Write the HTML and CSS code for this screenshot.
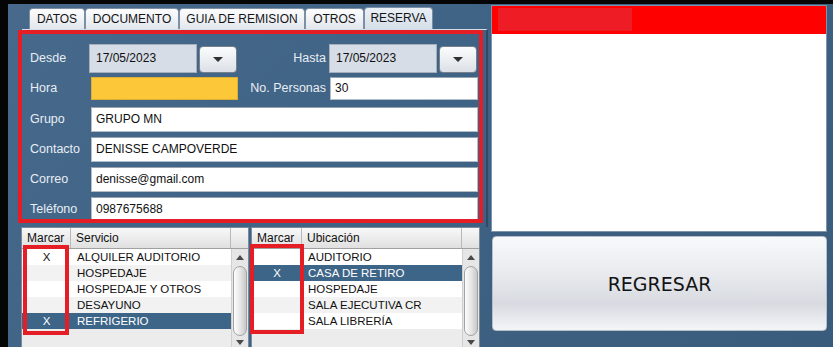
FILE: index.html
```html
<!DOCTYPE html>
<html lang="es">
<head>
<meta charset="utf-8">
<title>Reserva</title>
<link rel="stylesheet" href="styles.css">
</head>
<body>
<div class="screen">
  <div class="left">
    <div class="tabs">
      <div class="tab tab-datos">DATOS</div>
      <div class="tab tab-doc">DOCUMENTO</div>
      <div class="tab tab-guia">GUIA DE REMISION</div>
      <div class="tab tab-otros">OTROS</div>
      <div class="tab tab-reserva active">RESERVA</div>
    </div>
    <div class="pane">
      <div class="form">
        <div class="lbl lbl-date">Desde</div>
        <div class="date"><div class="date-in">17/05/2023</div><div class="date-btn"><span class="caret"></span></div></div>
        <div class="lbl lbl-date lbl-r">Hasta</div>
        <div class="date date-r"><div class="date-in">17/05/2023</div><div class="date-btn"><span class="caret"></span></div></div>

        <div class="lbl lbl-s">Hora</div>
        <div class="fld fld-s fld-yellow"></div>
        <div class="lbl lbl-s lbl-r">No. Personas</div>
        <div class="fld fld-s">30</div>

        <div class="lbl">Grupo</div>
        <div class="fld fld-wide">GRUPO MN</div>
        <div class="lbl">Contacto</div>
        <div class="fld fld-wide">DENISSE CAMPOVERDE</div>
        <div class="lbl">Correo</div>
        <div class="fld fld-wide">denisse@gmail.com</div>
        <div class="lbl">Teléfono</div>
        <div class="fld fld-wide">0987675688</div>
      </div>
    </div>
    <div class="tables">
      <div class="table t-left">
        <div class="thead"><div class="th c-mark">Marcar</div><div class="th c-name">Servicio</div><div class="th c-sb"></div></div>
        <div class="tbody">
          <div class="rows">
            <div class="row"><div class="td c-mark">X</div><div class="td c-name">ALQUILER AUDITORIO</div></div>
            <div class="row"><div class="td c-mark"></div><div class="td c-name">HOSPEDAJE</div></div>
            <div class="row"><div class="td c-mark"></div><div class="td c-name">HOSPEDAJE Y OTROS</div></div>
            <div class="row"><div class="td c-mark"></div><div class="td c-name">DESAYUNO</div></div>
            <div class="row sel"><div class="td c-mark">X</div><div class="td c-name">REFRIGERIO</div></div>
          </div>
          <div class="sb"><div class="sb-up"></div><div class="sb-thumb"></div><div class="sb-down"></div></div>
        </div>
      </div>
      <div class="table t-right">
        <div class="thead"><div class="th c-mark">Marcar</div><div class="th c-name">Ubicación</div><div class="th c-sb"></div></div>
        <div class="tbody">
          <div class="rows">
            <div class="row"><div class="td c-mark"></div><div class="td c-name">AUDITORIO</div></div>
            <div class="row sel"><div class="td c-mark">X</div><div class="td c-name">CASA DE RETIRO</div></div>
            <div class="row"><div class="td c-mark"></div><div class="td c-name">HOSPEDAJE</div></div>
            <div class="row"><div class="td c-mark"></div><div class="td c-name">SALA EJECUTIVA CR</div></div>
            <div class="row"><div class="td c-mark"></div><div class="td c-name">SALA LIBRERÍA</div></div>
          </div>
          <div class="sb"><div class="sb-up"></div><div class="sb-thumb"></div><div class="sb-down"></div></div>
        </div>
      </div>
    </div>
  </div>
  <div class="right">
    <div class="box"><div class="box-head"><div class="box-head-in"></div></div></div>
    <button class="btn">REGRESAR</button>
  </div>
  <div class="mark mark-form"></div>
  <div class="mark mark-t1"></div>
  <div class="mark mark-t2"></div>
</div>
</body>
</html>
```
FILE: styles.css
```css
body {
  margin: 0;
  width: 833px;
  height: 347px;
  overflow: hidden;
  background: #050505;
  font-family: "Liberation Sans", Arial, sans-serif;
  font-size: 12px;
}
.screen {
  position: relative;
  display: flex;
  align-items: flex-start;
  height: 347px;
  box-sizing: border-box;
  border-top: 4px solid #050505;
  border-left: 8px solid #050505;
  background: linear-gradient(135deg, #46698c 0%, #3f6385 45%, #3a5c7c 100%);
  overflow: hidden;
}
.left {
  flex: 0 0 480px;
  width: 480px;
}
.tabs {
  display: flex;
  align-items: flex-end;
  height: 22px;
  margin: 3px 0 0 21px;
}
.tab {
  box-sizing: border-box;
  height: 21px;
  border: 1px solid #7d8fa3;
  border-bottom: none;
  border-radius: 4px 4px 0 0;
  background: linear-gradient(#fdfdfe, #e2e7ed);
  color: #151515;
  font-size: 12px;
  line-height: 20px;
  text-align: center;
  white-space: nowrap;
}
.tab-datos { width: 56px; }
.tab-doc { width: 94px; }
.tab-guia { width: 126px; }
.tab-otros { width: 59px; }
.tab-reserva { width: 69px; }
.tab.active {
  height: 22px;
  line-height: 21px;
  background: linear-gradient(#eaf0f6, #d5dfe9);
}
.pane {
  margin-left: 14px;
  height: 198px;
  box-sizing: border-box;
  border-top: 1px solid #d5dde6;
  border-right: 2px solid #2f4a66;
  padding: 14px 8px 0 8px;
}
.form {
  display: grid;
  grid-template-columns: 61px 147px 92px 148px;
  grid-template-rows: 32px 31px 30px 30px 30px 25px;
  align-items: start;
}
.lbl {
  color: #e8eef4;
  font-size: 12.5px;
  line-height: 25px;
  white-space: nowrap;
}
.lbl-date { line-height: 29px; }
.lbl-s { line-height: 23px; margin-top: 1px; }
.lbl-r { text-align: right; padding-right: 4px; }
.date {
  display: flex;
  gap: 2px;
  width: 148px;
  margin-left: -2px;
}
.date-r { margin-left: -1px; }
.date-in {
  box-sizing: border-box;
  width: 108px;
  height: 29px;
  border: 1px solid #a5b0bc;
  background: #d7dde6;
  padding-left: 6px;
  line-height: 27px;
  color: #111;
}
.date-btn {
  box-sizing: border-box;
  width: 38px;
  height: 27px;
  margin-top: 2px;
  border: 1px solid #77818d;
  border-radius: 4px;
  background: linear-gradient(#fbfcfd, #dce0e6);
  display: flex;
  align-items: center;
  justify-content: center;
}
.caret {
  width: 0;
  height: 0;
  border-left: 5px solid transparent;
  border-right: 5px solid transparent;
  border-top: 5px solid #303030;
}
.fld {
  box-sizing: border-box;
  height: 25px;
  background: #fff;
  border: 1px solid #b3bdc8;
  border-top-color: #96a2af;
  padding-left: 4px;
  line-height: 23px;
  color: #111;
  white-space: nowrap;
}
.fld-s {
  height: 23px;
  line-height: 21px;
  margin-top: 1px;
}
.fld-yellow {
  background: #fcc83a;
  border-color: #dcae33;
}
.fld-wide { grid-column: 2 / 5; }

.tables {
  display: flex;
  gap: 2px;
  margin-left: 13px;
}
.table {
  box-sizing: border-box;
  height: 130px;
  border: 1px solid #7b8b9b;
  background: #ececec;
  display: flex;
  flex-direction: column;
}
.t-left { width: 228px; }
.t-right { width: 229px; }
.thead {
  display: flex;
  height: 21px;
  box-sizing: border-box;
  border-bottom: 1px solid #a0a0a0;
  background: linear-gradient(#f8f8f8, #e0e0e0);
}
.th {
  box-sizing: border-box;
  border-right: 1px solid #b8b8b8;
  padding-left: 5px;
  line-height: 20px;
  font-size: 12px;
  color: #111;
}
.c-mark { flex: 0 0 49px; width: 49px; box-sizing: border-box; }
.t-right .c-mark { flex-basis: 50px; width: 50px; }
.c-name { flex: 0 0 160px; width: 160px; box-sizing: border-box; white-space: nowrap; }
.c-sb { flex: 1; border-right: none; }
.tbody {
  display: flex;
  flex: 1;
}
.rows { flex: 1; }
.row {
  display: flex;
  height: 16px;
  background: #fff;
  font-size: 11.5px;
  line-height: 16px;
  color: #111;
}
.row:nth-child(even) { background: #f2f2f2; }
.row.sel { background: #3d6588; color: #fff; }
.td.c-mark { text-align: center; }
.td.c-name { padding-left: 6px; }
.sb {
  flex: 0 0 17px;
  width: 17px;
  box-sizing: border-box;
  border-left: 1px solid #cfcfcf;
  background: #e6e6e6;
  display: flex;
  flex-direction: column;
  align-items: center;
}
.sb-up {
  height: 16px;
  display: flex;
  align-items: center;
  justify-content: center;
}
.sb-up::before {
  content: "";
  border-left: 4px solid transparent;
  border-right: 4px solid transparent;
  border-bottom: 5px solid #4a4a4a;
}
.sb-thumb {
  width: 14px;
  height: 70px;
  margin-top: 1px;
  box-sizing: border-box;
  border: 1px solid #a3a3a3;
  border-radius: 7px;
  background: linear-gradient(to right, #fdfdfd, #e4e4e4 55%, #c8c8c8);
}
.sb-down {
  margin-top: 4px;
}
.sb-down::before {
  content: "";
  display: block;
  border-left: 4px solid transparent;
  border-right: 4px solid transparent;
  border-top: 5px solid #4a4a4a;
}

.right {
  margin: 1px 0 0 3px;
  width: 336px;
}
.box {
  box-sizing: border-box;
  height: 227px;
  border: 1px solid #7f94aa;
  background: #fff;
}
.box-head {
  box-sizing: border-box;
  height: 28px;
  padding: 2px 0 0 6px;
  background: #ff0000;
}
.box-head-in {
  width: 134px;
  height: 23px;
  background: #ee1c24;
}
.btn {
  display: block;
  box-sizing: border-box;
  width: 335px;
  height: 95px;
  margin: 4px 0 0 1px;
  padding: 0;
  border: 1px solid #b9bfc8;
  border-radius: 4px;
  background: linear-gradient(#f8f9fb 0%, #e8eaee 40%, #d7dae0 72%, #eaecf0 90%, #f4f5f8 100%);
  font-family: "Comic Sans MS", "DejaVu Sans", sans-serif;
  font-size: 19px;
  color: #141414;
}

.mark {
  position: absolute;
  box-sizing: border-box;
  border: 4px solid #e51d25;
}
.mark-form { left: 10px; top: 26px; width: 465px; height: 193px; }
.mark-t1 { left: 15px; top: 241px; width: 46px; height: 90px; }
.mark-t2 { left: 242px; top: 240px; width: 54px; height: 90px; }
```
